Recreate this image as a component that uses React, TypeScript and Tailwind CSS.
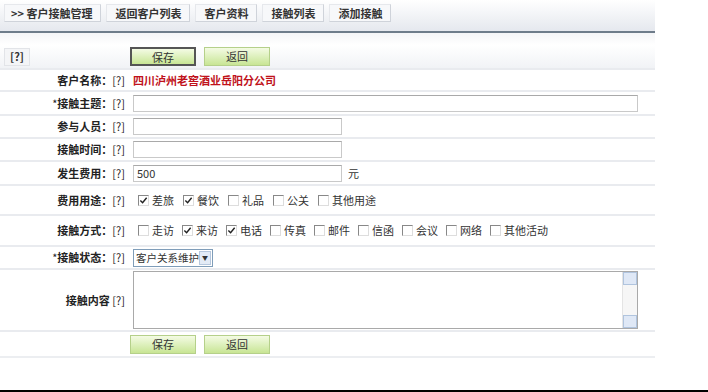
const font = { fontFamily: '"SimSun", "Noto Sans CJK SC", "Liberation Sans", sans-serif' }

const tabs = ['>> 客户接触管理', '返回客户列表', '客户资料', '接触列表', '添加接触']

function Check({ label, checked }: { label: string; checked?: boolean }) {
  return (
    <label className="flex items-center gap-[3px] text-[11px] text-[#333]">
      <span className="flex h-[11px] w-[11px] items-center justify-center border border-t-[#888] border-l-[#888] border-b-[#ddd] border-r-[#ddd] bg-white">
        {checked && (
          <svg viewBox="0 0 10 10" className="h-[9px] w-[9px]">
            <path d="M1.5 5 L4 7.5 L8.5 2" fill="none" stroke="#222" strokeWidth="1.6" />
          </svg>
        )}
      </span>
      <span>{label}</span>
    </label>
  )
}

function Btn({ children, focused }: { children: string; focused?: boolean }) {
  return (
    <button
      className={
        'h-[19px] w-[66px] bg-gradient-to-b from-[#f4fbe4] to-[#c8e594] text-[11px] text-[#333] ' +
        (focused ? 'border-2 border-[#555]' : 'border border-[#b5d08a]')
      }
    >
      {children}
    </button>
  )
}

function Row({
  label,
  star,
  h,
  children,
  colon = true,
}: {
  label: string
  star?: boolean
  h: string
  children?: React.ReactNode
  colon?: boolean
}) {
  return (
    <div className={`flex items-center border-b-2 border-[#e9ebef] ${h}`}>
      <div className="w-[127px] shrink-0 pr-[2px] text-right text-[11px] font-bold text-[#222]">
        {star && <span className="font-normal">*</span>}
        {label}
        {colon ? '：' : ' '}
        <span className="font-normal">[?]</span>
      </div>
      <div className="flex flex-1 items-center pl-[6px]">{children}</div>
    </div>
  )
}

const inputCls =
  'h-[17px] border border-[#c9c9c9] border-t-[#a9a9a9] bg-white px-[3px] text-[11px] text-[#333] outline-none'

export default function App() {
  return (
    <div className="relative h-[392px] w-[708px] bg-white" style={font}>
      <div className="w-[655px]">
        <div className="flex h-[31px] items-start gap-[5px] bg-gradient-to-b from-white to-[#e5e8ee] pl-[4px] pt-[4px]">
          {tabs.map((t, i) => (
            <div
              key={t}
              className={
                'flex h-[18px] items-center border border-[#e6e8ec] border-b-[#cfd3da] border-r-[#cfd3da] bg-[#f7f8fa] px-[8px] text-[11px] font-bold text-[#333] ' +
                (i === 0 ? 'pl-[6px]' : '')
              }
            >
              {t}
            </div>
          ))}
        </div>
        <div className="h-[2px] bg-[#6e7c8a]" />
        <div className="h-[12px] bg-gradient-to-b from-[#f4f5f7] to-white" />

        <div className="flex h-[25px] items-center border-b-2 border-[#e9ebef] bg-gradient-to-b from-white to-[#f1f3f6]">
          <div className="ml-[4px] flex h-[18px] w-[26px] items-center justify-center border border-[#e2e4e8] bg-[#f4f5f7] text-[11px] font-bold text-[#333]">
            [?]
          </div>
          <div className="ml-[100px] flex gap-[8px]">
            <Btn focused>保存</Btn>
            <Btn>返回</Btn>
          </div>
        </div>

        <Row label="客户名称" h="h-[22px]">
          <span className="text-[11px] font-bold text-[#c0121b]">四川泸州老窖酒业岳阳分公司</span>
        </Row>
        <Row label="接触主题" star h="h-[24px]">
          <input className={inputCls + ' w-[505px]'} />
        </Row>
        <Row label="参与人员" h="h-[23px]">
          <input className={inputCls + ' w-[209px]'} />
        </Row>
        <Row label="接触时间" h="h-[23px]">
          <input className={inputCls + ' w-[209px]'} />
        </Row>
        <Row label="发生费用" h="h-[24px]">
          <input className={inputCls + ' w-[209px]'} defaultValue="500" />
          <span className="ml-[6px] text-[11px] text-[#333]">元</span>
        </Row>
        <Row label="费用用途" h="h-[30px]">
          <div className="flex gap-[9px] pl-[5px]">
            <Check label="差旅" checked />
            <Check label="餐饮" checked />
            <Check label="礼品" />
            <Check label="公关" />
            <Check label="其他用途" />
          </div>
        </Row>
        <Row label="接触方式" h="h-[31px]">
          <div className="flex gap-[8px] pl-[5px]">
            <Check label="走访" />
            <Check label="来访" checked />
            <Check label="电话" checked />
            <Check label="传真" />
            <Check label="邮件" />
            <Check label="信函" />
            <Check label="会议" />
            <Check label="网络" />
            <Check label="其他活动" />
          </div>
        </Row>
        <Row label="接触状态" star h="h-[23px]">
          <div className="flex h-[18px] w-[80px] items-center overflow-hidden whitespace-nowrap border border-[#7f9db9] bg-white text-[10.5px] text-[#333]">
            <span className="flex-1 pl-[2px]">客户关系维护</span>
            <span className="mr-[1px] flex h-[14px] w-[12px] shrink-0 items-center justify-center border border-[#b6c7dd] bg-[#e3ebf6] text-[6px] text-[#333]">
              ▼
            </span>
          </div>
        </Row>
        <Row label="接触内容" colon={false} h="h-[62px]">
          <div className="flex h-[58px] w-[505px] border border-[#a9a9a9] bg-white">
            <div className="flex-1" />
            <div className="flex w-[15px] flex-col justify-between border-l border-[#e4e4e4] bg-[#f6f6f6]">
              <span className="h-[13px] w-[14px] border border-[#b0c4de] bg-[#dfe8f6]" />
              <span className="h-[13px] w-[14px] border border-[#b0c4de] bg-[#dfe8f6]" />
            </div>
          </div>
        </Row>
        <div className="flex h-[26px] items-center border-b-2 border-[#eceef1]">
          <div className="ml-[130px] flex gap-[8px]">
            <Btn>保存</Btn>
            <Btn>返回</Btn>
          </div>
        </div>
      </div>
      <div className="absolute bottom-0 left-0 h-[2px] w-full bg-black" />
    </div>
  )
}
